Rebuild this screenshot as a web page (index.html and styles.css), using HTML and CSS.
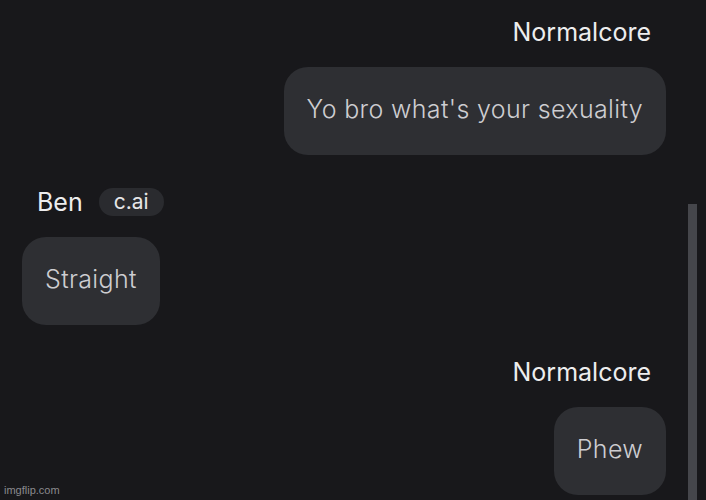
FILE: index.html
```html
<!DOCTYPE html>
<html>
<head>
<meta charset="utf-8">
<link rel="stylesheet" href="styles.css">
</head>
<body>
<div class="chat">
  <div class="msg msg-user">
    <div class="name-row"><span class="name">Normalcore</span></div>
    <div class="bubble">Yo bro what's your sexuality</div>
  </div>
  <div class="msg msg-bot">
    <div class="name-row"><span class="name">Ben</span><span class="badge">c.ai</span></div>
    <div class="bubble">Straight</div>
  </div>
  <div class="msg msg-user">
    <div class="name-row"><span class="name">Normalcore</span></div>
    <div class="bubble">Phew</div>
  </div>
</div>
<div class="scrollbar"></div>
<div class="watermark">imgflip.com</div>
</body>
</html>
```
FILE: styles.css
```css
html, body {
  margin: 0;
  padding: 0;
  background: #18181b;
  width: 706px;
  height: 500px;
  overflow: hidden;
  font-family: Inter, "Noto Sans", sans-serif;
}
.chat {
  display: flex;
  flex-direction: column;
  gap: 32px;
  padding: 17px 40px 0 22px;
}
.msg {
  display: flex;
  flex-direction: column;
  gap: 20px;
}
.msg-user { align-items: flex-end; }
.msg-bot { align-items: flex-start; }
.name-row {
  display: flex;
  align-items: center;
  gap: 16px;
  height: 30px;
  padding: 0 15px;
}
.name {
  color: #ededee;
  font-size: 25px;
  line-height: 30px;
}
.badge {
  background: #2a2b2f;
  color: #e6e6e8;
  font-size: 21px;
  line-height: 28px;
  padding: 0 15px;
  border-radius: 14px;
}
.bubble {
  background: #2e2f33;
  color: #cdcdd1;
  font-size: 25px;
  font-weight: 300;
  letter-spacing: 0.35px;
  line-height: 30px;
  padding: 27px 23px 31px;
  border-radius: 24px;
}
.scrollbar {
  position: absolute;
  left: 688px;
  top: 204px;
  width: 9px;
  height: 296px;
  background: #45464b;
}
.watermark {
  position: absolute;
  left: 4px;
  top: 484px;
  font-family: "Liberation Sans", Arial, sans-serif;
  font-size: 11px;
  color: #8a8a8e;
}
```
